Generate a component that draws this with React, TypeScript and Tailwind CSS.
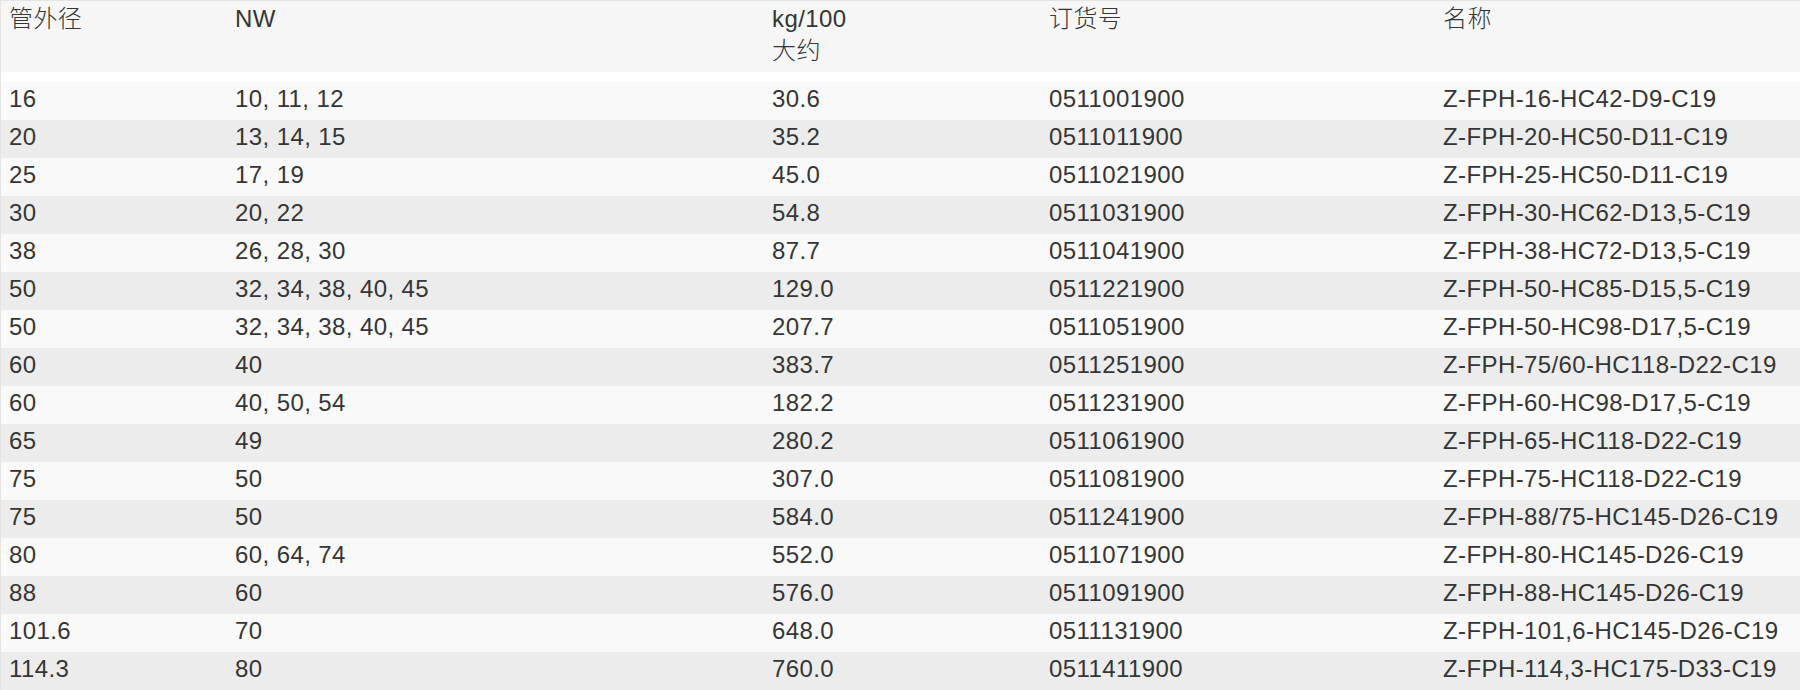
import React from "react";

const rows: [string, string, string, string, string][] = [
  ["16", "10, 11, 12", "30.6", "0511001900", "Z-FPH-16-HC42-D9-C19"],
  ["20", "13, 14, 15", "35.2", "0511011900", "Z-FPH-20-HC50-D11-C19"],
  ["25", "17, 19", "45.0", "0511021900", "Z-FPH-25-HC50-D11-C19"],
  ["30", "20, 22", "54.8", "0511031900", "Z-FPH-30-HC62-D13,5-C19"],
  ["38", "26, 28, 30", "87.7", "0511041900", "Z-FPH-38-HC72-D13,5-C19"],
  ["50", "32, 34, 38, 40, 45", "129.0", "0511221900", "Z-FPH-50-HC85-D15,5-C19"],
  ["50", "32, 34, 38, 40, 45", "207.7", "0511051900", "Z-FPH-50-HC98-D17,5-C19"],
  ["60", "40", "383.7", "0511251900", "Z-FPH-75/60-HC118-D22-C19"],
  ["60", "40, 50, 54", "182.2", "0511231900", "Z-FPH-60-HC98-D17,5-C19"],
  ["65", "49", "280.2", "0511061900", "Z-FPH-65-HC118-D22-C19"],
  ["75", "50", "307.0", "0511081900", "Z-FPH-75-HC118-D22-C19"],
  ["75", "50", "584.0", "0511241900", "Z-FPH-88/75-HC145-D26-C19"],
  ["80", "60, 64, 74", "552.0", "0511071900", "Z-FPH-80-HC145-D26-C19"],
  ["88", "60", "576.0", "0511091900", "Z-FPH-88-HC145-D26-C19"],
  ["101.6", "70", "648.0", "0511131900", "Z-FPH-101,6-HC145-D26-C19"],
  ["114.3", "80", "760.0", "0511411900", "Z-FPH-114,3-HC175-D33-C19"],
];

const cols = "grid grid-cols-[226px_537px_277px_394px_1fr]";

export default function App() {
  return (
    <div
      className="w-[1800px] h-[690px] overflow-hidden bg-white text-[24px] font-light text-[#353535] tracking-[0.4px] border-t border-l border-[#e4e4e4]"
      style={{ fontFamily: '"Liberation Sans", "Noto Sans CJK SC", sans-serif' }}
    >
      <div className={`${cols} h-[71px] bg-[#f6f6f6] leading-[32px] pt-[2px]`}>
        <div className="pl-2">管外径</div>
        <div className="pl-2">NW</div>
        <div className="pl-2">
          kg/100
          <br />
          大约
        </div>
        <div className="pl-2">订货号</div>
        <div className="pl-2">名称</div>
      </div>
      <div className="h-[10px]" />
      {rows.map((r, i) => (
        <div
          key={i}
          className={`${cols} h-[38px] leading-[34px] pb-1 ${
            i % 2 === 0 ? "bg-[#f9f9f9]" : "bg-[#ececec]"
          }`}
        >
          {r.map((c, j) => (
            <div key={j} className="pl-2 whitespace-nowrap">
              {c}
            </div>
          ))}
        </div>
      ))}
    </div>
  );
}
